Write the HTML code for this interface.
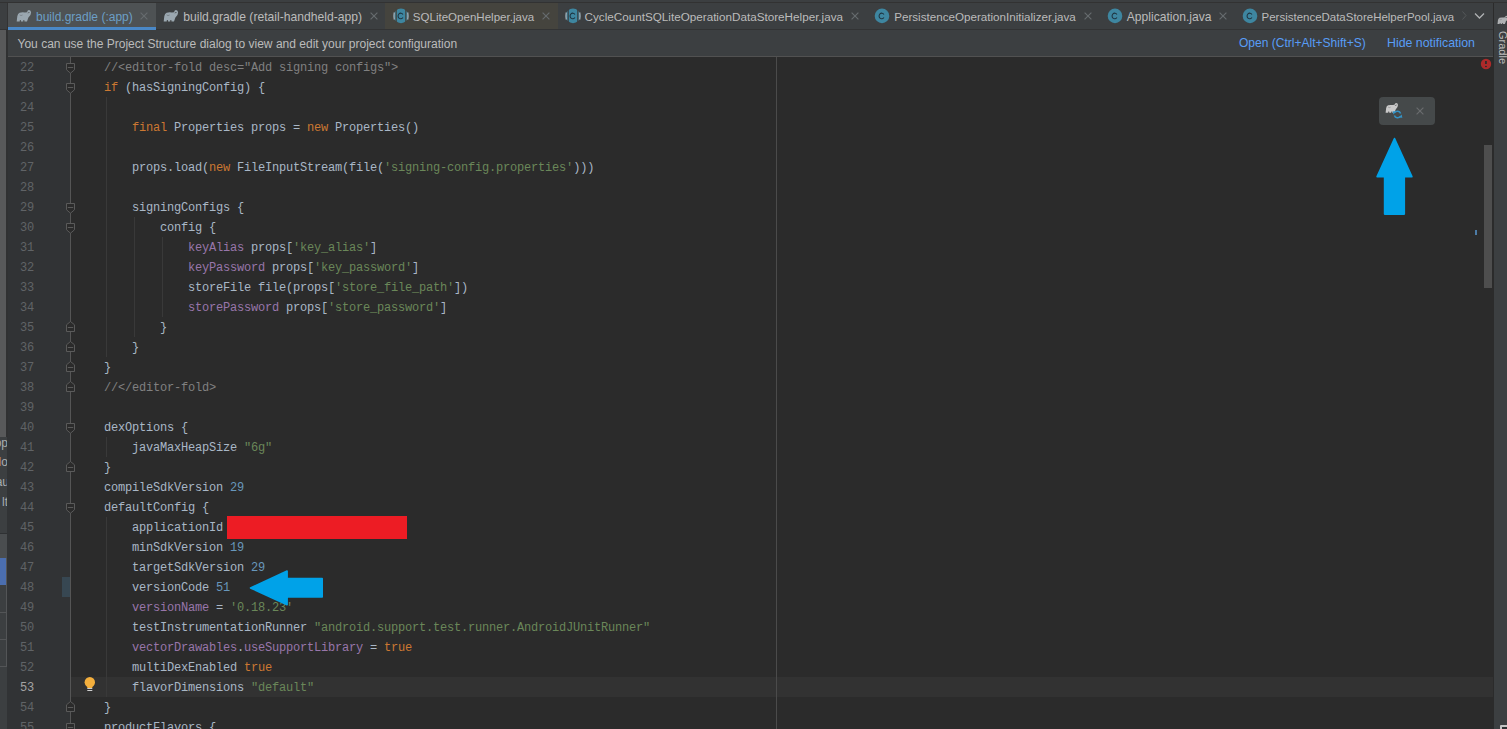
<!DOCTYPE html>
<html><head><meta charset="utf-8">
<style>
*{box-sizing:border-box}
html,body{margin:0;padding:0}
body{width:1507px;height:729px;overflow:hidden;position:relative;background:#2b2b2b;font-family:"Liberation Sans",sans-serif}
.abs{position:absolute}
.ln{position:absolute;left:104px;height:20px;line-height:20px;white-space:pre;font-family:"Liberation Mono",monospace;font-size:12px;letter-spacing:-0.2px;color:#a9b7c6}
.k{color:#cc7832} .s{color:#6a8759} .n{color:#6897bb} .c{color:#808080} .p{color:#9876aa}
.num{position:absolute;left:7px;width:27px;text-align:right;height:20px;line-height:20px;font-family:"Liberation Mono",monospace;font-size:12px;letter-spacing:-0.2px;color:#606366}
.num.cur{color:#a4a3a3}
.fold{position:absolute;left:66px}
.guide{position:absolute;width:1px;background:#393939}
.ico{position:absolute;line-height:0}
.tabt{position:absolute;top:7px;height:20px;line-height:20px;white-space:nowrap}
</style></head><body>
<!-- top strip -->
<div class="abs" style="left:0;top:0;width:1507px;height:2px;background:#3c3f41"></div>
<div class="abs" style="left:0;top:2px;width:1507px;height:1px;background:#323232"></div>
<!-- tab bar -->
<div class="abs" style="left:8px;top:3px;width:1485px;height:26px;background:#3c3f41"></div>
<div class="abs" style="left:0;top:29px;width:1493px;height:1px;background:#323334"></div>
<div style="position:absolute;left:8px;top:3px;width:148px;height:26px;background:#4e5254"></div><div class="ico" style="left:16px;top:9px"><svg width="16" height="13" viewBox="0 0 16 13"><path d="M0.7,12.4 L1.3,7.2 Q1.7,4.7 3.6,3.8 Q5.5,3.1 9,3.5 L11,3.2 Q11.5,1.2 13,1.1 Q15,1.2 15.1,3.6 Q15.1,6.6 12.4,8.6 L11,12.4 H8.5 L8.3,11.1 H7.4 L7.2,12.4 H5 L4.8,11.1 H3.9 L3.7,12.4 Z" fill="#9aa7b0"/><path d="M11.3,4.3 Q12.2,2.7 13.9,3.3 Q13.4,4.4 11.3,4.3 Z" fill="#4e5254"/><path d="M3.6,5.9 Q4.9,7.2 6.6,6" stroke="#4e5254" stroke-width="0.6" fill="none" opacity="0.6"/></svg></div><div class="tabt" style="left:36.0px;font-size:12px;color:#6c9fc6">build.gradle (:app)</div><div class="ico" style="left:140px;top:12px"><svg width="8" height="8" viewBox="0 0 8 8"><path d="M0.6,0.6 L7.4,7.4 M7.4,0.6 L0.6,7.4" stroke="#666b6e" stroke-width="1.15"/></svg></div><div class="ico" style="left:163px;top:9px"><svg width="16" height="13" viewBox="0 0 16 13"><path d="M0.7,12.4 L1.3,7.2 Q1.7,4.7 3.6,3.8 Q5.5,3.1 9,3.5 L11,3.2 Q11.5,1.2 13,1.1 Q15,1.2 15.1,3.6 Q15.1,6.6 12.4,8.6 L11,12.4 H8.5 L8.3,11.1 H7.4 L7.2,12.4 H5 L4.8,11.1 H3.9 L3.7,12.4 Z" fill="#9aa7b0"/><path d="M11.3,4.3 Q12.2,2.7 13.9,3.3 Q13.4,4.4 11.3,4.3 Z" fill="#3c3f41"/><path d="M3.6,5.9 Q4.9,7.2 6.6,6" stroke="#3c3f41" stroke-width="0.6" fill="none" opacity="0.6"/></svg></div><div class="tabt" style="left:183.2px;font-size:12.15px;color:#bbbbbb">build.gradle (retail-handheld-app)</div><div class="ico" style="left:370px;top:12px"><svg width="8" height="8" viewBox="0 0 8 8"><path d="M0.6,0.6 L7.4,7.4 M7.4,0.6 L0.6,7.4" stroke="#666b6e" stroke-width="1.15"/></svg></div><div style="position:absolute;left:385px;top:3px;width:173px;height:26px;background:#45443e"></div><div class="ico" style="left:393px;top:8px"><svg width="16" height="16" viewBox="0 0 16 16"><circle cx="8" cy="7.9" r="7.3" fill="#3e86a0"/><rect x="2.6" y="0" width="1.2" height="16" fill="#45443e"/><rect x="12.2" y="0" width="1.2" height="16" fill="#45443e"/><path d="M1.4,4.5 Q0.6,8 1.4,11.5 M14.6,4.5 Q15.4,8 14.6,11.5" stroke="#9aa7b0" stroke-width="1.4" fill="none"/><path d="M9.9,6.5 A2.6,2.8 0 1 0 9.9,9.4" stroke="#1e3440" stroke-width="1.05" fill="none"/></svg></div><div class="tabt" style="left:412.8px;font-size:11.55px;color:#bbbbbb">SQLiteOpenHelper.java</div><div class="ico" style="left:542px;top:12px"><svg width="8" height="8" viewBox="0 0 8 8"><path d="M0.6,0.6 L7.4,7.4 M7.4,0.6 L0.6,7.4" stroke="#666b6e" stroke-width="1.15"/></svg></div><div class="ico" style="left:565px;top:8px"><svg width="16" height="16" viewBox="0 0 16 16"><circle cx="8" cy="7.9" r="7.3" fill="#3e86a0"/><rect x="2.6" y="0" width="1.2" height="16" fill="#3c3f41"/><rect x="12.2" y="0" width="1.2" height="16" fill="#3c3f41"/><path d="M1.4,4.5 Q0.6,8 1.4,11.5 M14.6,4.5 Q15.4,8 14.6,11.5" stroke="#9aa7b0" stroke-width="1.4" fill="none"/><path d="M9.9,6.5 A2.6,2.8 0 1 0 9.9,9.4" stroke="#1e3440" stroke-width="1.05" fill="none"/></svg></div><div class="tabt" style="left:584.5px;font-size:11.7px;color:#bbbbbb">CycleCountSQLiteOperationDataStoreHelper.java</div><div class="ico" style="left:851px;top:12px"><svg width="8" height="8" viewBox="0 0 8 8"><path d="M0.6,0.6 L7.4,7.4 M7.4,0.6 L0.6,7.4" stroke="#666b6e" stroke-width="1.15"/></svg></div><div class="ico" style="left:874px;top:8px"><svg width="16" height="16" viewBox="0 0 16 16"><circle cx="8" cy="7.9" r="7.3" fill="#3e86a0"/><path d="M9.9,6.5 A2.6,2.8 0 1 0 9.9,9.4" stroke="#1e3440" stroke-width="1.05" fill="none"/></svg></div><div class="tabt" style="left:894.2px;font-size:11.64px;color:#bbbbbb">PersistenceOperationInitializer.java</div><div class="ico" style="left:1084px;top:12px"><svg width="8" height="8" viewBox="0 0 8 8"><path d="M0.6,0.6 L7.4,7.4 M7.4,0.6 L0.6,7.4" stroke="#666b6e" stroke-width="1.15"/></svg></div><div class="ico" style="left:1107px;top:8px"><svg width="16" height="16" viewBox="0 0 16 16"><circle cx="8" cy="7.9" r="7.3" fill="#3e86a0"/><path d="M9.9,6.5 A2.6,2.8 0 1 0 9.9,9.4" stroke="#1e3440" stroke-width="1.05" fill="none"/></svg></div><div class="tabt" style="left:1126.8px;font-size:12.08px;color:#bbbbbb">Application.java</div><div class="ico" style="left:1219px;top:12px"><svg width="8" height="8" viewBox="0 0 8 8"><path d="M0.6,0.6 L7.4,7.4 M7.4,0.6 L0.6,7.4" stroke="#666b6e" stroke-width="1.15"/></svg></div><div class="ico" style="left:1242px;top:8px"><svg width="16" height="16" viewBox="0 0 16 16"><circle cx="8" cy="7.9" r="7.3" fill="#3e86a0"/><path d="M9.9,6.5 A2.6,2.8 0 1 0 9.9,9.4" stroke="#1e3440" stroke-width="1.05" fill="none"/></svg></div><div class="tabt" style="left:1261.6px;font-size:11.47px;color:#bbbbbb">PersistenceDataStoreHelperPool.java</div>
<div class="abs" style="left:8px;top:27px;width:148px;height:3px;background:#4a88c7"></div>
<div class="abs" style="left:8px;top:30px;width:148px;height:1px;background:#343536"></div>
<div class="abs" style="left:1462px;top:11px;line-height:0"><svg width="5" height="9" viewBox="0 0 5 9"><path d="M0.5,0.5 L4,4.5 L0.5,8.5" stroke="#55585a" stroke-width="1" fill="none"/></svg></div>
<div class="abs" style="left:1474px;top:12px;line-height:0"><svg width="11" height="8" viewBox="0 0 11 8"><path d="M1,1.5 L5.5,6 L10,1.5" stroke="#afb1b3" stroke-width="1.3" fill="none"/></svg></div>
<!-- notification bar -->
<div class="abs" style="left:7px;top:30px;width:1486px;height:26px;background:#3c3f41"></div>
<div class="abs" style="left:7px;top:56px;width:1486px;height:1px;background:#515151"></div>
<div class="abs" style="left:17.5px;top:34px;height:20px;line-height:20px;font-size:12.04px;color:#bbbbbb;white-space:nowrap">You can use the Project Structure dialog to view and edit your project configuration</div>
<div class="abs" style="left:1239px;top:33px;height:20px;line-height:20px;font-size:12.04px;color:#589df6;white-space:nowrap">Open (Ctrl+Alt+Shift+S)</div>
<div class="abs" style="left:1387px;top:33px;height:20px;line-height:20px;font-size:12.36px;color:#589df6;white-space:nowrap">Hide notification</div>
<!-- left strip -->
<div class="abs" style="left:0;top:3px;width:7px;height:726px;background:#3c3f41"></div>
<div class="abs" style="left:0;top:29px;width:8px;height:1px;background:#323334"></div>
<div class="abs" style="left:7px;top:3px;width:1px;height:27px;background:#323334"></div>
<div class="abs" style="left:0;top:30px;width:6px;height:407px;background:#58595a"></div>
<div class="abs" style="left:6px;top:30px;width:2px;height:407px;background:#303132"></div>
<div class="abs" style="left:0;top:437px;width:7px;height:96px;overflow:hidden;font-size:12px;color:#a8adb0;line-height:20px">
<div style="position:absolute;right:-1px;top:-4px;white-space:nowrap">op</div>
<div style="position:absolute;right:-1px;top:15px;white-space:nowrap"><span style="color:#b0805a">l</span>o</div>
<div style="position:absolute;right:-2px;top:35px;white-space:nowrap">au</div>
<div style="position:absolute;right:-1px;top:55px;white-space:nowrap">lt</div>
</div>
<div class="abs" style="left:0;top:533px;width:7px;height:1px;background:#2f3133"></div>
<div class="abs" style="left:0;top:534px;width:7px;height:24px;background:#4a4d4f"></div>
<div class="abs" style="left:0;top:558px;width:6px;height:27px;background:#4b6eaf"></div>
<div class="abs" style="left:6px;top:558px;width:1px;height:108px;background:#535557"></div>
<div class="abs" style="left:0;top:612px;width:6px;height:1px;background:#535557"></div>
<div class="abs" style="left:0;top:639px;width:6px;height:1px;background:#535557"></div>
<div class="abs" style="left:0;top:666px;width:7px;height:1px;background:#535557"></div>
<!-- gutter -->
<div class="abs" style="left:8px;top:57px;width:62px;height:672px;background:#313335"></div>
<div class="abs" style="left:7px;top:437px;width:1px;height:292px;background:#313335"></div>
<!-- current line -->
<div class="abs" style="left:71px;top:677px;width:1422px;height:20px;background:#323232"></div>
<!-- right margin -->
<div class="abs" style="left:776px;top:57px;width:1px;height:672px;background:#4b4b4b"></div>
<!-- fold line -->
<div class="abs" style="left:70px;top:57px;width:1px;height:672px;background:#555555"></div>
<!-- vcs marker -->
<div class="abs" style="left:62px;top:577px;width:8px;height:20px;background:#374752"></div>
<div class="guide" style="left:106px;top:97px;height:260px"></div><div class="guide" style="left:134px;top:217px;height:120px"></div><div class="guide" style="left:162px;top:237px;height:80px"></div><div class="guide" style="left:106px;top:437px;height:20px"></div><div class="guide" style="left:106px;top:517px;height:180px"></div>
<svg class="fold" style="top:63px" width="9" height="11" viewBox="0 0 9 11"><path d="M0.5,0.5 H8.5 V6.8 L4.5,10.2 L0.5,6.8 Z" fill="#2b2b2b" stroke="#5a5a5a" stroke-width="1"/><path d="M1.8,4.5 H7.2" stroke="#5a5a5a" stroke-width="1"/></svg><svg class="fold" style="top:83px" width="9" height="11" viewBox="0 0 9 11"><path d="M0.5,0.5 H8.5 V6.8 L4.5,10.2 L0.5,6.8 Z" fill="#2b2b2b" stroke="#5a5a5a" stroke-width="1"/><path d="M1.8,4.5 H7.2" stroke="#5a5a5a" stroke-width="1"/></svg><svg class="fold" style="top:203px" width="9" height="11" viewBox="0 0 9 11"><path d="M0.5,0.5 H8.5 V6.8 L4.5,10.2 L0.5,6.8 Z" fill="#2b2b2b" stroke="#5a5a5a" stroke-width="1"/><path d="M1.8,4.5 H7.2" stroke="#5a5a5a" stroke-width="1"/></svg><svg class="fold" style="top:223px" width="9" height="11" viewBox="0 0 9 11"><path d="M0.5,0.5 H8.5 V6.8 L4.5,10.2 L0.5,6.8 Z" fill="#2b2b2b" stroke="#5a5a5a" stroke-width="1"/><path d="M1.8,4.5 H7.2" stroke="#5a5a5a" stroke-width="1"/></svg><svg class="fold" style="top:321px" width="9" height="11" viewBox="0 0 9 11"><path d="M0.5,10.5 H8.5 V3.8 L4.5,0.5 L0.5,3.8 Z" fill="#2b2b2b" stroke="#5a5a5a" stroke-width="1"/><path d="M1.8,6.5 H7.2" stroke="#5a5a5a" stroke-width="1"/></svg><svg class="fold" style="top:341px" width="9" height="11" viewBox="0 0 9 11"><path d="M0.5,10.5 H8.5 V3.8 L4.5,0.5 L0.5,3.8 Z" fill="#2b2b2b" stroke="#5a5a5a" stroke-width="1"/><path d="M1.8,6.5 H7.2" stroke="#5a5a5a" stroke-width="1"/></svg><svg class="fold" style="top:361px" width="9" height="11" viewBox="0 0 9 11"><path d="M0.5,10.5 H8.5 V3.8 L4.5,0.5 L0.5,3.8 Z" fill="#2b2b2b" stroke="#5a5a5a" stroke-width="1"/><path d="M1.8,6.5 H7.2" stroke="#5a5a5a" stroke-width="1"/></svg><svg class="fold" style="top:381px" width="9" height="11" viewBox="0 0 9 11"><path d="M0.5,10.5 H8.5 V3.8 L4.5,0.5 L0.5,3.8 Z" fill="#2b2b2b" stroke="#5a5a5a" stroke-width="1"/><path d="M1.8,6.5 H7.2" stroke="#5a5a5a" stroke-width="1"/></svg><svg class="fold" style="top:423px" width="9" height="11" viewBox="0 0 9 11"><path d="M0.5,0.5 H8.5 V6.8 L4.5,10.2 L0.5,6.8 Z" fill="#2b2b2b" stroke="#5a5a5a" stroke-width="1"/><path d="M1.8,4.5 H7.2" stroke="#5a5a5a" stroke-width="1"/></svg><svg class="fold" style="top:461px" width="9" height="11" viewBox="0 0 9 11"><path d="M0.5,10.5 H8.5 V3.8 L4.5,0.5 L0.5,3.8 Z" fill="#2b2b2b" stroke="#5a5a5a" stroke-width="1"/><path d="M1.8,6.5 H7.2" stroke="#5a5a5a" stroke-width="1"/></svg><svg class="fold" style="top:503px" width="9" height="11" viewBox="0 0 9 11"><path d="M0.5,0.5 H8.5 V6.8 L4.5,10.2 L0.5,6.8 Z" fill="#2b2b2b" stroke="#5a5a5a" stroke-width="1"/><path d="M1.8,4.5 H7.2" stroke="#5a5a5a" stroke-width="1"/></svg><svg class="fold" style="top:701px" width="9" height="11" viewBox="0 0 9 11"><path d="M0.5,10.5 H8.5 V3.8 L4.5,0.5 L0.5,3.8 Z" fill="#2b2b2b" stroke="#5a5a5a" stroke-width="1"/><path d="M1.8,6.5 H7.2" stroke="#5a5a5a" stroke-width="1"/></svg><svg class="fold" style="top:723px" width="9" height="11" viewBox="0 0 9 11"><path d="M0.5,0.5 H8.5 V6.8 L4.5,10.2 L0.5,6.8 Z" fill="#2b2b2b" stroke="#5a5a5a" stroke-width="1"/><path d="M1.8,4.5 H7.2" stroke="#5a5a5a" stroke-width="1"/></svg>
<div class="num" style="top:58px">22</div><div class="num" style="top:78px">23</div><div class="num" style="top:98px">24</div><div class="num" style="top:118px">25</div><div class="num" style="top:138px">26</div><div class="num" style="top:158px">27</div><div class="num" style="top:178px">28</div><div class="num" style="top:198px">29</div><div class="num" style="top:218px">30</div><div class="num" style="top:238px">31</div><div class="num" style="top:258px">32</div><div class="num" style="top:278px">33</div><div class="num" style="top:298px">34</div><div class="num" style="top:318px">35</div><div class="num" style="top:338px">36</div><div class="num" style="top:358px">37</div><div class="num" style="top:378px">38</div><div class="num" style="top:398px">39</div><div class="num" style="top:418px">40</div><div class="num" style="top:438px">41</div><div class="num" style="top:458px">42</div><div class="num" style="top:478px">43</div><div class="num" style="top:498px">44</div><div class="num" style="top:518px">45</div><div class="num" style="top:538px">46</div><div class="num" style="top:558px">47</div><div class="num" style="top:578px">48</div><div class="num" style="top:598px">49</div><div class="num" style="top:618px">50</div><div class="num" style="top:638px">51</div><div class="num" style="top:658px">52</div><div class="num cur" style="top:678px">53</div><div class="num" style="top:698px">54</div><div class="num" style="top:718px">55</div>
<div class="ln" style="top:58px"><span class="c">//&lt;editor-fold desc=&quot;Add signing configs&quot;&gt;</span></div><div class="ln" style="top:78px"><span class="k">if</span> (hasSigningConfig) {</div><div class="ln" style="top:98px"></div><div class="ln" style="top:118px">    <span class="k">final</span> Properties props = <span class="k">new</span> Properties()</div><div class="ln" style="top:138px"></div><div class="ln" style="top:158px">    props.load(<span class="k">new</span> FileInputStream(file(<span class="s">&#x27;signing-config.properties&#x27;</span>)))</div><div class="ln" style="top:178px"></div><div class="ln" style="top:198px">    signingConfigs {</div><div class="ln" style="top:218px">        config {</div><div class="ln" style="top:238px">            <span class="p">keyAlias</span> props[<span class="s">&#x27;key_alias&#x27;</span>]</div><div class="ln" style="top:258px">            <span class="p">keyPassword</span> props[<span class="s">&#x27;key_password&#x27;</span>]</div><div class="ln" style="top:278px">            storeFile file(props[<span class="s">&#x27;store_file_path&#x27;</span>])</div><div class="ln" style="top:298px">            <span class="p">storePassword</span> props[<span class="s">&#x27;store_password&#x27;</span>]</div><div class="ln" style="top:318px">        }</div><div class="ln" style="top:338px">    }</div><div class="ln" style="top:358px">}</div><div class="ln" style="top:378px"><span class="c">//&lt;/editor-fold&gt;</span></div><div class="ln" style="top:398px"></div><div class="ln" style="top:418px">dexOptions {</div><div class="ln" style="top:438px">    javaMaxHeapSize <span class="s">&quot;6g&quot;</span></div><div class="ln" style="top:458px">}</div><div class="ln" style="top:478px">compileSdkVersion <span class="n">29</span></div><div class="ln" style="top:498px">defaultConfig {</div><div class="ln" style="top:518px">    applicationId</div><div class="ln" style="top:538px">    minSdkVersion <span class="n">19</span></div><div class="ln" style="top:558px">    targetSdkVersion <span class="n">29</span></div><div class="ln" style="top:578px">    versionCode <span class="n">51</span></div><div class="ln" style="top:598px">    <span class="p">versionName</span> = <span class="s">&#x27;0.18.23&#x27;</span></div><div class="ln" style="top:618px">    testInstrumentationRunner <span class="s">&quot;android.support.test.runner.AndroidJUnitRunner&quot;</span></div><div class="ln" style="top:638px">    <span class="p">vectorDrawables</span>.<span class="p">useSupportLibrary</span> = <span class="k">true</span></div><div class="ln" style="top:658px">    multiDexEnabled <span class="k">true</span></div><div class="ln" style="top:678px">    flavorDimensions <span class="s">&quot;default&quot;</span></div><div class="ln" style="top:698px">}</div><div class="ln" style="top:718px">productFlavors {</div>
<!-- red redaction -->
<div class="abs" style="left:227px;top:516px;width:180px;height:23px;background:#ed1c24"></div>
<!-- bulb -->
<div class="abs" style="left:84px;top:677px;line-height:0"><svg width="12" height="15" viewBox="0 0 12 15"><circle cx="5.8" cy="5.3" r="5.2" fill="#f4af3d"/><rect x="3.3" y="8" width="5" height="3" fill="#f4af3d"/><rect x="3.3" y="11" width="5" height="1" fill="#cfcfcf"/><rect x="3.3" y="13" width="5" height="1" fill="#cfcfcf"/></svg></div>
<!-- blue left arrow -->
<div class="abs" style="left:0;top:0;line-height:0"><svg width="1507" height="729" style="position:absolute;left:0;top:0"><g fill="#00a2e8" stroke="#00a2e8" stroke-width="1.6" stroke-linejoin="round"><path d="M250.5,587.9 L287.1,571.1 L287.1,578.5 L322.2,578.5 L322.2,596.9 L287.1,596.9 L287.1,604.7 Z"/><path d="M1394.5,138.6 L1411.9,176.7 L1404.3,176.7 L1404.3,214.1 L1384.6,214.1 L1384.6,176.7 L1377.1,176.7 Z"/></g></svg></div>
<!-- error icon -->
<div class="abs" style="left:1480px;top:58px;line-height:0"><svg width="12" height="12" viewBox="0 0 12 12"><circle cx="6" cy="6" r="5.2" fill="#ad2a2a"/><rect x="5.1" y="3" width="1.7" height="3" fill="#2b2b2b"/><rect x="5.1" y="7.9" width="1.7" height="1.2" fill="#2b2b2b"/></svg></div>
<!-- gradle popup -->
<div class="abs" style="left:1379px;top:97px;width:56px;height:28px;background:#45494a;border-radius:4px"></div>
<div class="abs" style="left:1385px;top:102px;line-height:0"><div style="transform:scale(0.86);transform-origin:0 0"><svg width="16" height="13" viewBox="0 0 16 13"><path d="M0.7,12.4 L1.3,7.2 Q1.7,4.7 3.6,3.8 Q5.5,3.1 9,3.5 L11,3.2 Q11.5,1.2 13,1.1 Q15,1.2 15.1,3.6 Q15.1,6.6 12.4,8.6 L11,12.4 H8.5 L8.3,11.1 H7.4 L7.2,12.4 H5 L4.8,11.1 H3.9 L3.7,12.4 Z" fill="#c9c9c9"/><path d="M11.3,4.3 Q12.2,2.7 13.9,3.3 Q13.4,4.4 11.3,4.3 Z" fill="#45494a"/><path d="M3.6,5.9 Q4.9,7.2 6.6,6" stroke="#45494a" stroke-width="0.6" fill="none" opacity="0.6"/></svg></div></div>
<div class="abs" style="left:1392px;top:109px;line-height:0"><svg width="11" height="11" viewBox="0 0 11 11"><path d="M8.6,4.4 A3.4,3.4 0 0 0 2.6,3.6 M2.4,6.6 A3.4,3.4 0 0 0 8.4,7.4" stroke="#3592c4" stroke-width="1.5" fill="none"/><path d="M0.6,2.2 L4.4,2.6 L1.4,5.6 Z M10.4,8.8 L6.6,8.4 L9.6,5.4 Z" fill="#3592c4"/></svg></div>
<div class="abs" style="left:1416px;top:107px;line-height:0"><svg width="8" height="8" viewBox="0 0 8 8"><path d="M0.6,0.6 L7.4,7.4 M7.4,0.6 L0.6,7.4" stroke="#6a6c6e" stroke-width="1.15"/></svg></div>
<!-- scrollbar -->
<div class="abs" style="left:1484px;top:145px;width:8px;height:143px;background:#4e4e4e"></div>
<div class="abs" style="left:1475px;top:230px;width:2px;height:5px;background:#4c7ba6"></div>
<!-- right strip -->
<div class="abs" style="left:1493px;top:3px;width:1px;height:726px;background:#2b2b2b"></div>
<div class="abs" style="left:1494px;top:3px;width:13px;height:726px;background:#3c3f41"></div>
<div class="abs" style="left:1497px;top:15px;line-height:0;overflow:hidden;width:10px;height:11px"><div style="transform:scale(0.72);transform-origin:0 0"><svg width="16" height="13" viewBox="0 0 16 13"><path d="M0.7,12.4 L1.3,7.2 Q1.7,4.7 3.6,3.8 Q5.5,3.1 9,3.5 L11,3.2 Q11.5,1.2 13,1.1 Q15,1.2 15.1,3.6 Q15.1,6.6 12.4,8.6 L11,12.4 H8.5 L8.3,11.1 H7.4 L7.2,12.4 H5 L4.8,11.1 H3.9 L3.7,12.4 Z" fill="#afb1b3"/><path d="M11.3,4.3 Q12.2,2.7 13.9,3.3 Q13.4,4.4 11.3,4.3 Z" fill="#3c3f41"/><path d="M3.6,5.9 Q4.9,7.2 6.6,6" stroke="#3c3f41" stroke-width="0.6" fill="none" opacity="0.6"/></svg></div></div>
<div class="abs" style="left:1494px;top:31px;width:20px;height:40px;overflow:visible"><div style="position:absolute;left:0;top:0;transform-origin:0 0;transform:translate(16px,0) rotate(90deg);font-size:11px;color:#bbbbbb;white-space:nowrap;line-height:14px">Gradle</div></div>
<div class="abs" style="left:1500px;top:725px;width:10px;height:8px;border:2px solid #c4c4c4;border-radius:1px;background:#2f3133"></div>
</body></html>
